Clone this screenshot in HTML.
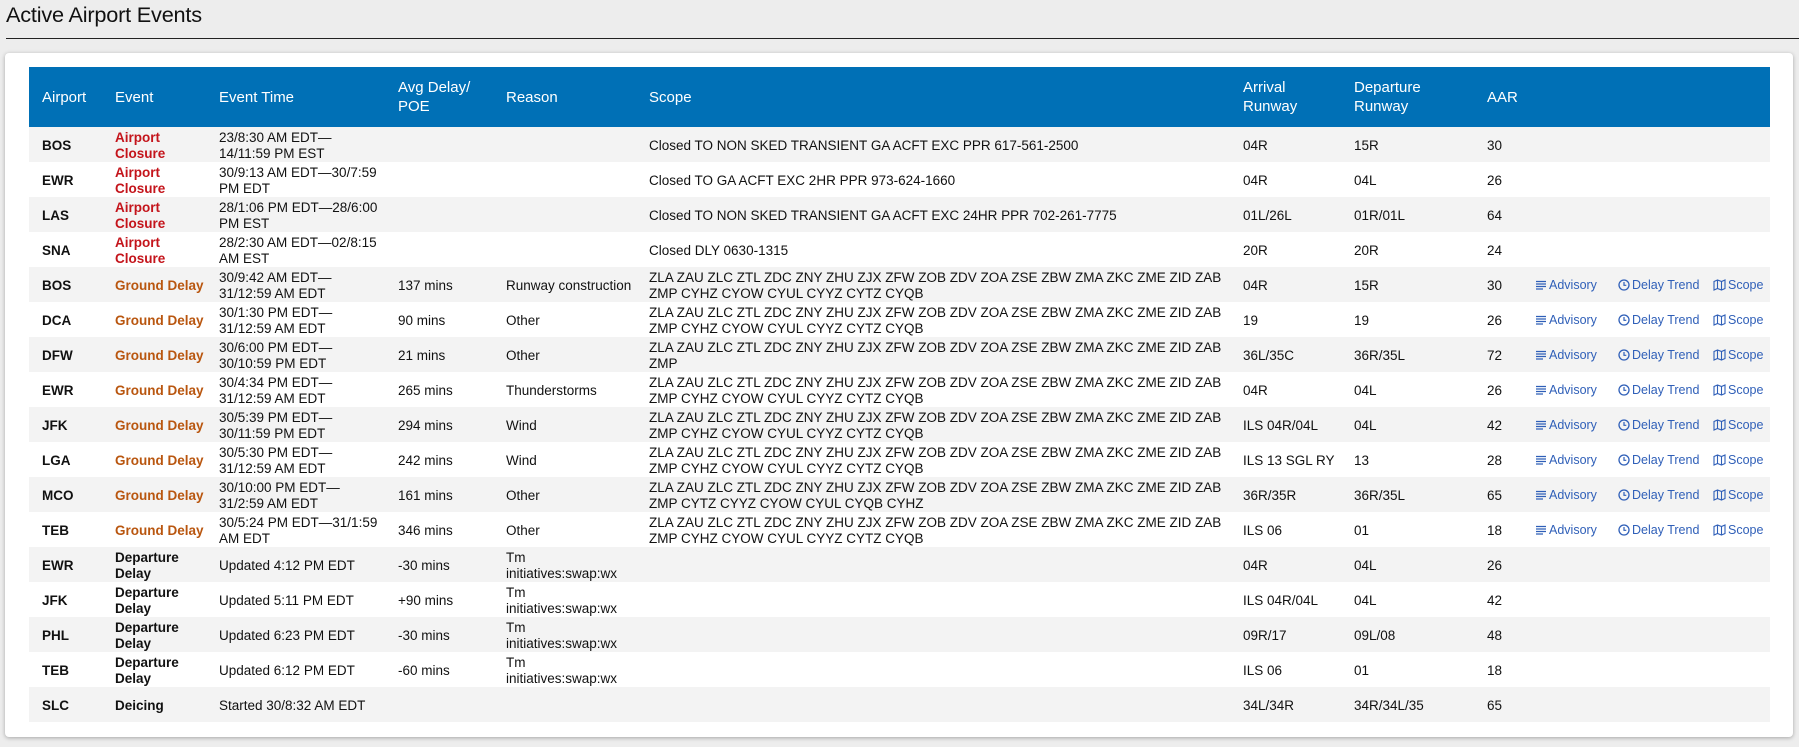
<!DOCTYPE html>
<html><head><meta charset="utf-8">
<style>
html,body{margin:0;padding:0;}
body{width:1799px;height:747px;background:#ededed;font-family:"Liberation Sans",sans-serif;color:#111;overflow:hidden;position:relative;}
h1{position:absolute;left:6px;top:2px;margin:0;font-size:21.7px;font-weight:normal;color:#111;letter-spacing:-0.2px;}
.rule{position:absolute;left:6px;right:0;top:38px;height:1px;background:#222;}
.card{position:absolute;left:5px;top:53px;width:1788px;height:684px;background:#fff;border-radius:4px;box-shadow:0 1px 4px rgba(0,0,0,.3);}
table{position:absolute;left:24px;top:14px;border-collapse:collapse;table-layout:fixed;width:1741px;font-size:13.5px;}
th{background:#0070b6;color:#fff;font-weight:normal;text-align:left;font-size:15px;line-height:19px;height:60px;padding:0 0 0 13px;vertical-align:middle;}
tbody tr{height:35px;}
td{height:35px;box-sizing:border-box;padding:2px 0 0 13px;line-height:16px;vertical-align:middle;white-space:nowrap;overflow:visible;}
tbody tr:nth-child(odd) td{background:#f3f3f3;}
.b{font-weight:bold;}
.red{color:#c4141b;font-weight:bold;}
.org{color:#b9560f;font-weight:bold;}
.lk{position:relative;}
.lk span{position:absolute;top:10px;color:#2f5fb8;font-size:12.5px;display:flex;align-items:center;gap:2px;}
svg{display:block}
</style></head><body>
<h1>Active Airport Events</h1>
<div class="rule"></div>
<div class="card">
<table>
<colgroup><col style="width:73px"><col style="width:104px"><col style="width:179px"><col style="width:108px"><col style="width:143px"><col style="width:594px"><col style="width:111px"><col style="width:133px"><col style="width:48px"><col style="width:248px"></colgroup>
<thead><tr><th>Airport</th><th>Event</th><th>Event Time</th><th>Avg Delay/<br>POE</th><th>Reason</th><th>Scope</th><th>Arrival<br>Runway</th><th>Departure<br>Runway</th><th>AAR</th><th></th></tr></thead>
<tbody>
<tr><td class="b">BOS</td><td class="red">Airport<br>Closure</td><td>23/8:30 AM EDT—<br>14/11:59 PM EST</td><td></td><td></td><td>Closed TO NON SKED TRANSIENT GA ACFT EXC PPR 617-561-2500</td><td>04R</td><td>15R</td><td>30</td><td></td></tr>
<tr><td class="b">EWR</td><td class="red">Airport<br>Closure</td><td>30/9:13 AM EDT—30/7:59<br>PM EDT</td><td></td><td></td><td>Closed TO GA ACFT EXC 2HR PPR 973-624-1660</td><td>04R</td><td>04L</td><td>26</td><td></td></tr>
<tr><td class="b">LAS</td><td class="red">Airport<br>Closure</td><td>28/1:06 PM EDT—28/6:00<br>PM EST</td><td></td><td></td><td>Closed TO NON SKED TRANSIENT GA ACFT EXC 24HR PPR 702-261-7775</td><td>01L/26L</td><td>01R/01L</td><td>64</td><td></td></tr>
<tr><td class="b">SNA</td><td class="red">Airport<br>Closure</td><td>28/2:30 AM EDT—02/8:15<br>AM EST</td><td></td><td></td><td>Closed DLY 0630-1315</td><td>20R</td><td>20R</td><td>24</td><td></td></tr>
<tr><td class="b">BOS</td><td class="org">Ground Delay</td><td>30/9:42 AM EDT—<br>31/12:59 AM EDT</td><td>137 mins</td><td>Runway construction</td><td>ZLA ZAU ZLC ZTL ZDC ZNY ZHU ZJX ZFW ZOB ZDV ZOA ZSE ZBW ZMA ZKC ZME ZID ZAB<br>ZMP CYHZ CYOW CYUL CYYZ CYTZ CYQB</td><td>04R</td><td>15R</td><td>30</td><td class="lk">LINKS</td></tr>
<tr><td class="b">DCA</td><td class="org">Ground Delay</td><td>30/1:30 PM EDT—<br>31/12:59 AM EDT</td><td>90 mins</td><td>Other</td><td>ZLA ZAU ZLC ZTL ZDC ZNY ZHU ZJX ZFW ZOB ZDV ZOA ZSE ZBW ZMA ZKC ZME ZID ZAB<br>ZMP CYHZ CYOW CYUL CYYZ CYTZ CYQB</td><td>19</td><td>19</td><td>26</td><td class="lk">LINKS</td></tr>
<tr><td class="b">DFW</td><td class="org">Ground Delay</td><td>30/6:00 PM EDT—<br>30/10:59 PM EDT</td><td>21 mins</td><td>Other</td><td>ZLA ZAU ZLC ZTL ZDC ZNY ZHU ZJX ZFW ZOB ZDV ZOA ZSE ZBW ZMA ZKC ZME ZID ZAB<br>ZMP</td><td>36L/35C</td><td>36R/35L</td><td>72</td><td class="lk">LINKS</td></tr>
<tr><td class="b">EWR</td><td class="org">Ground Delay</td><td>30/4:34 PM EDT—<br>31/12:59 AM EDT</td><td>265 mins</td><td>Thunderstorms</td><td>ZLA ZAU ZLC ZTL ZDC ZNY ZHU ZJX ZFW ZOB ZDV ZOA ZSE ZBW ZMA ZKC ZME ZID ZAB<br>ZMP CYHZ CYOW CYUL CYYZ CYTZ CYQB</td><td>04R</td><td>04L</td><td>26</td><td class="lk">LINKS</td></tr>
<tr><td class="b">JFK</td><td class="org">Ground Delay</td><td>30/5:39 PM EDT—<br>30/11:59 PM EDT</td><td>294 mins</td><td>Wind</td><td>ZLA ZAU ZLC ZTL ZDC ZNY ZHU ZJX ZFW ZOB ZDV ZOA ZSE ZBW ZMA ZKC ZME ZID ZAB<br>ZMP CYHZ CYOW CYUL CYYZ CYTZ CYQB</td><td>ILS 04R/04L</td><td>04L</td><td>42</td><td class="lk">LINKS</td></tr>
<tr><td class="b">LGA</td><td class="org">Ground Delay</td><td>30/5:30 PM EDT—<br>31/12:59 AM EDT</td><td>242 mins</td><td>Wind</td><td>ZLA ZAU ZLC ZTL ZDC ZNY ZHU ZJX ZFW ZOB ZDV ZOA ZSE ZBW ZMA ZKC ZME ZID ZAB<br>ZMP CYHZ CYOW CYUL CYYZ CYTZ CYQB</td><td>ILS 13 SGL RY</td><td>13</td><td>28</td><td class="lk">LINKS</td></tr>
<tr><td class="b">MCO</td><td class="org">Ground Delay</td><td>30/10:00 PM EDT—<br>31/2:59 AM EDT</td><td>161 mins</td><td>Other</td><td>ZLA ZAU ZLC ZTL ZDC ZNY ZHU ZJX ZFW ZOB ZDV ZOA ZSE ZBW ZMA ZKC ZME ZID ZAB<br>ZMP CYTZ CYYZ CYOW CYUL CYQB CYHZ</td><td>36R/35R</td><td>36R/35L</td><td>65</td><td class="lk">LINKS</td></tr>
<tr><td class="b">TEB</td><td class="org">Ground Delay</td><td>30/5:24 PM EDT—31/1:59<br>AM EDT</td><td>346 mins</td><td>Other</td><td>ZLA ZAU ZLC ZTL ZDC ZNY ZHU ZJX ZFW ZOB ZDV ZOA ZSE ZBW ZMA ZKC ZME ZID ZAB<br>ZMP CYHZ CYOW CYUL CYYZ CYTZ CYQB</td><td>ILS 06</td><td>01</td><td>18</td><td class="lk">LINKS</td></tr>
<tr><td class="b">EWR</td><td class="b">Departure<br>Delay</td><td>Updated 4:12 PM EDT</td><td>-30 mins</td><td>Tm<br>initiatives:swap:wx</td><td></td><td>04R</td><td>04L</td><td>26</td><td></td></tr>
<tr><td class="b">JFK</td><td class="b">Departure<br>Delay</td><td>Updated 5:11 PM EDT</td><td>+90 mins</td><td>Tm<br>initiatives:swap:wx</td><td></td><td>ILS 04R/04L</td><td>04L</td><td>42</td><td></td></tr>
<tr><td class="b">PHL</td><td class="b">Departure<br>Delay</td><td>Updated 6:23 PM EDT</td><td>-30 mins</td><td>Tm<br>initiatives:swap:wx</td><td></td><td>09R/17</td><td>09L/08</td><td>48</td><td></td></tr>
<tr><td class="b">TEB</td><td class="b">Departure<br>Delay</td><td>Updated 6:12 PM EDT</td><td>-60 mins</td><td>Tm<br>initiatives:swap:wx</td><td></td><td>ILS 06</td><td>01</td><td>18</td><td></td></tr>
<tr><td class="b">SLC</td><td class="b">Deicing</td><td>Started 30/8:32 AM EDT</td><td></td><td></td><td></td><td>34L/34R</td><td>34R/34L/35</td><td>65</td><td></td></tr>
</tbody></table>
</div>
<script>
var html='<span style="left:13px"><svg width="12" height="10" viewBox="0 0 12 10"><path d="M1 1.5H11M1 4H11M1 6.5H11M1 9H8" stroke="#2f5fb8" stroke-width="1.2"/></svg>Advisory</span>'+
'<span style="left:96px"><svg width="12" height="12" viewBox="0 0 12 12"><circle cx="6" cy="6" r="5" fill="none" stroke="#2f5fb8" stroke-width="1.3"/><path d="M6 3V6.3H8.3" fill="none" stroke="#2f5fb8" stroke-width="1.2"/></svg>Delay Trend</span>'+
'<span style="left:191px"><svg width="13" height="12" viewBox="0 0 13 12"><path d="M1 2.5L4.5 1L8.5 2.5L12 1V9.5L8.5 11L4.5 9.5L1 11Z M4.5 1V9.5 M8.5 2.5V11" fill="none" stroke="#2f5fb8" stroke-width="1.1"/></svg>Scope</span>';
document.querySelectorAll('td.lk').forEach(function(t){t.innerHTML=html;});
</script>
</body></html>
